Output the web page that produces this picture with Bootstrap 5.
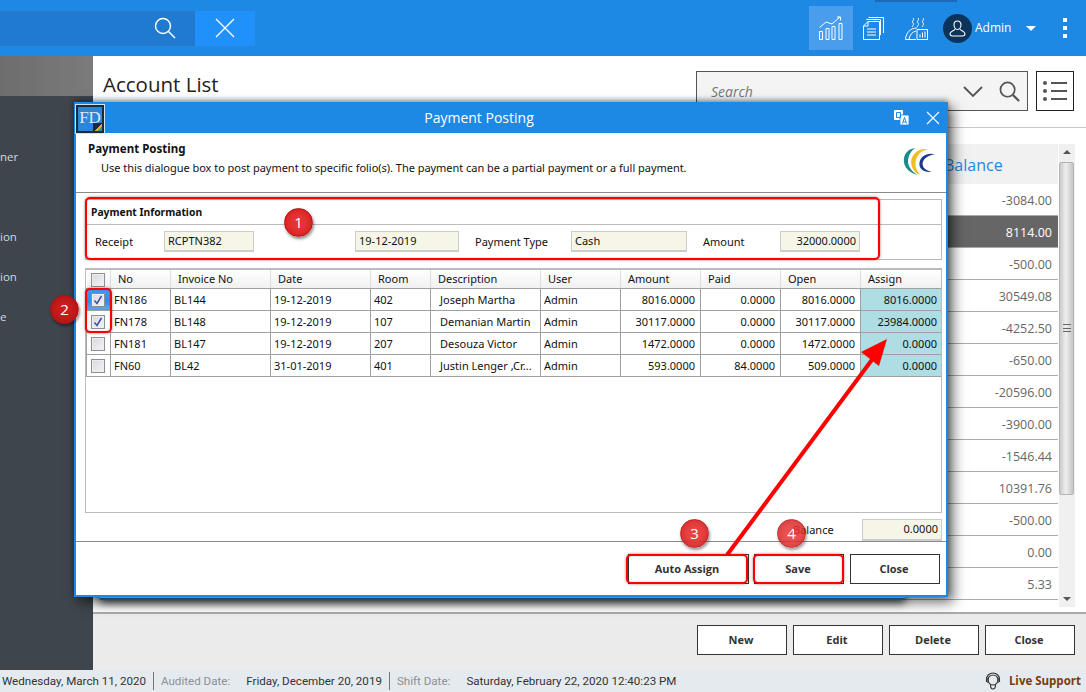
<!DOCTYPE html>
<html lang="en">
<head>
<meta charset="utf-8">
<title>Payment Posting</title>
<link href="https://cdn.jsdelivr.net/npm/bootstrap@5.3.0/dist/css/bootstrap.min.css" rel="stylesheet">
<style>
html,body{margin:0;height:100%;overflow:hidden}
body{font-family:"Open Sans","Liberation Sans",sans-serif;background:#fff;color:#222}
.app-shell{position:relative;width:1086px;height:692px;overflow:hidden}
.top-bar{height:56px;background:#1e88e5;color:#fff}
.top-strip{position:absolute;left:875px;top:0;width:82px;height:2px;background:#1c6ab5}
.search-top{width:256px;height:37px;background:#207ad0;border:1px solid #2a86dc;border-left:0}
.search-top-field{width:195px;padding-right:18px}
.search-top-close{width:60px;background:#2090fb}
.icon-slot{height:44px}
.slot-active{background:#4a9ded;width:44px}
.slot-docs{width:41px}
.slot-steam{width:49px;padding-right:4px}
.avatar-disc{width:29px;height:29px;border-radius:50%;background:#0c3359}
.admin-name{font-size:12px;width:51px;margin-left:3px}
.caret-tri{width:0;height:0;border-left:5.5px solid transparent;border-right:5.5px solid transparent;border-top:5.5px solid #fff;margin-right:27px}
.dot-stack{width:4px;margin-right:19px;gap:4px}
.dot-stack span{display:block;width:4px;height:4px;background:#fff}
.side-rail{width:93px;background:#3e454c;color:#d5d9dc;font-size:11.5px}
.side-head{height:40px;background:linear-gradient(90deg,#6d6d6d,#7b7b7b);margin-bottom:52px}
.side-item{height:40px;line-height:18px}
.main-head{height:72px;padding:0 12px 0 10px;border-bottom:1px solid #c8c8c8}
.page-title{font-size:20.5px;font-weight:400;margin:0;color:#222;line-height:30px;padding-top:13px}
.list-search{width:332px;height:40px;border:1px solid #555;background:#f4f4f4;margin-top:15px;padding:0 7px 0 14px;font-style:italic;color:#777;font-size:14px}
.list-toggle{width:38px;height:40px;border:1px solid #222;margin:15px 0 0 8px;background:#fff}
.list-zone{height:484px;padding:16px 11px 5px 7px}
.bal-head{height:40px;background:#f1f1f1;color:#1e88e5;font-size:16px;padding-left:844px;line-height:43px}
.bal-row{height:32px;border-bottom:1px solid #aaa;text-align:right;padding-right:6px;font-size:12.5px;line-height:33px;color:#666}
.bal-row.is-dark{background:#666;color:#fff}
.scroll-rail{width:16px;margin-left:1px;background:#f0f0f0;position:relative}
.scroll-thumb{position:absolute;left:0;right:1px;top:18px;height:333px;background:linear-gradient(90deg,#c9c9c9,#efefef 45%,#c4c4c4);border:1px solid #b5b5b5;border-radius:2px}
.scroll-up,.scroll-down{position:absolute;left:4px;width:0;height:0;border-left:4px solid transparent;border-right:4px solid transparent}
.scroll-up{top:6px;border-bottom:4px solid #555}
.scroll-down{bottom:6px;border-top:4px solid #555}
.grip-mark{position:absolute;left:3px;top:161px;width:8px;height:8px;border-top:1px solid #666;border-bottom:1px solid #666}
.grip-mark::after{content:"";display:block;height:1px;background:#666;margin-top:2.5px}
.foot-bar{height:58px;background:#ebebeb;border-top:2px solid #aaa;padding:11px 11px 0 0;gap:6px}
.plain-btn{width:90px;height:30px;border:1.5px solid #333;background:#fff;border-radius:0;font-family:"Open Sans",sans-serif;font-size:11px;font-weight:700;color:#333;padding:0 2px 0 0}
.status-bar{height:22px;background:#e5eaee;font-family:Roboto,"Open Sans",sans-serif;font-size:11.6px;color:#333;padding-left:2px;white-space:nowrap;line-height:22px}
.status-dim{color:#8a9096}
.status-sep{width:1px;height:18px;background:#777;margin:0 7px}
.live-help{color:#7a3c0a;font-family:"Open Sans",sans-serif;font-weight:700;font-size:11.5px;margin-right:5px}
.back-window{position:absolute;left:100px;top:300px;width:805px;height:300px;background:#fff;border-bottom:2px solid #1e88e5;box-shadow:0 3px 8px rgba(0,0,0,.7)}
.pay-window{position:absolute;left:74px;top:102px;width:874px;height:495px;background:#fff;border:2px solid #1e88e5;border-top:0;box-shadow:5px 5px 12px rgba(0,0,0,.6),0 -2px 5px rgba(0,0,0,.35);font-family:"Noto Sans","DejaVu Sans",sans-serif;font-size:11px;color:#111}
.win-title{height:31px;background:#1e88e5;color:#fff;font-size:14px;font-family:"Open Sans",sans-serif;position:relative;margin:0 -2px;padding-right:64px}
.fd-logo{position:absolute;left:1px;top:2px;width:30px;height:30px;background:#2a86d8;border:1px solid #cfe3f5;box-shadow:inset 0 0 0 2px #1c2b3a;color:#dceafa;font-family:"Liberation Serif",serif;font-size:17px;line-height:26px;text-align:center;overflow:hidden}
.fd-logo::after{content:"";position:absolute;right:2px;bottom:2px;width:9px;height:8px;background:linear-gradient(135deg,#1c2b3a 55%,#d6b020 55%,#d6b020 75%,#2e9a96 75%)}
.win-tools{position:absolute;right:8px;top:7px;gap:16px}
.win-intro{height:60px;border-bottom:1px solid #8a8a8a;padding:7px 12px 0 12px;position:relative}
.intro-title{font-weight:700;line-height:16px;margin-top:1px;font-size:11.5px}
.intro-text{padding-left:13px;line-height:18px;margin-top:2px;letter-spacing:-.03px}
.swirl-logo{position:absolute;right:10px;top:14px}
.group-frame{margin:6px 4px 0 9px;height:61px;border:1px solid #bbb}
.group-head{height:25px;border-bottom:1px solid #bbb;font-weight:700;font-size:10.3px;padding-left:5px;line-height:24px}
.group-fields{display:grid;grid-template-columns:69px 90px 101px 104px 112px 116px 93px 80px;padding:6px 0 0 9px;align-items:center}
.group-fields>span{padding-top:2px}
.pad-left{padding-left:16px}
.field-box{height:21px;background:#f6f6e8;border:1px solid #ccc;border-bottom-width:2px;padding:0 3px;line-height:17px;white-space:nowrap}
.text-num{text-align:right}
.grid-frame{margin:8px 4px 0 9px;height:245px;border:1px solid #bbb;border-width:2px 1px 1px 1px;overflow:hidden}
.folio-grid{table-layout:fixed;border-collapse:collapse;width:856px;font-size:11px;color:#111}
.folio-grid th{height:18px;font-weight:400;background:linear-gradient(#fff,#f0f0f0);border-right:1px solid #ddd;border-bottom:1px solid #a0a0a0;padding:0 0 0 7px;line-height:17px}
.folio-grid td{height:22px;border:1px solid #a0a0a0;padding:1px 3px 0;line-height:20px;white-space:nowrap;overflow:hidden}
.folio-grid td.name-cell{padding-left:9px}
.folio-grid td.num-cell{text-align:right;padding-right:5px}
.folio-grid td.pick-cell,.folio-grid th.pick-cell{padding:0 1px 0 0;text-align:center}
.folio-grid td.pick-on{background:linear-gradient(#3f9cf4,#2f8ce8 60%,#5aa9f0)}
.folio-grid td.assign-cell{background:#aeddE3}
.w-pick{width:24px}.w-no{width:60px}.w-inv{width:100px}.w-date{width:100px}.w-room{width:60px}.w-desc{width:110px}.w-amt{width:80px}.w-last{width:82px}
.tick-box{display:inline-block;width:14px;height:14px;border:1px solid #8e8f8f;background:linear-gradient(135deg,#d6d8de,#f5f5f7);vertical-align:middle;box-shadow:inset 0 0 0 1px #eee;line-height:0}
.balance-line{height:29px;border-bottom:1px solid #8a8a8a;padding-top:6px}
.balance-label{width:69px;line-height:21px}
.balance-box{width:80px;margin-right:4px;height:22px}
.win-actions{padding:12px 6px 0 0;gap:6px}
.win-actions .w-wide{width:121px;margin-right:-1px;padding-right:3px}
.anno-layer{position:absolute;left:0;top:0;pointer-events:none}
.red-frame{position:absolute;border:2px solid #f00;border-radius:5px;box-shadow:0 0 3px rgba(120,0,0,.55),inset 0 0 2px rgba(120,0,0,.25)}
.frame-one{left:85px;top:197px;width:795px;height:63px}
.frame-two{left:85px;top:288px;width:27px;height:45px}
.frame-three{left:626px;top:554px;width:122px;height:30px}
.frame-four{left:753px;top:554px;width:91px;height:30px}
.num-dot{position:absolute;width:29px;height:29px;border-radius:50%;background:radial-gradient(circle,#e63232 35%,#d01818);border:1px solid #b01010;box-shadow:1px 2px 3px rgba(0,0,0,.45);color:#fff;text-align:center;font-family:"Open Sans",sans-serif;font-size:15px;line-height:27px}
.dot-one{left:284px;top:208px}
.dot-two{left:50px;top:295px;background:radial-gradient(circle,#c81c1c 35%,#a81010)}
.dot-three{left:680px;top:519px;opacity:.92}
.dot-four{left:777px;top:519px;opacity:.85}
</style>
</head>
<body>
<div class="app-shell d-flex flex-column">
  <div class="top-bar d-flex align-items-center flex-shrink-0">
    <div class="search-top d-flex align-items-stretch">
      <div class="search-top-field d-flex align-items-center justify-content-end">
        <svg width="24" height="24" viewBox="0 0 24 24" fill="none" stroke="#fff" stroke-width="1.4"><circle cx="10" cy="10" r="7.5"/><path d="M15.5 15.5 22 22"/></svg>
      </div>
      <div class="search-top-close d-flex align-items-center justify-content-center">
        <svg width="20" height="20" viewBox="0 0 20 20" stroke="#fff" stroke-width="1.3"><path d="M1 1 19 19M19 1 1 19"/></svg>
      </div>
    </div>
    <div class="ms-auto d-flex align-items-center">
      <div class="icon-slot slot-active d-flex align-items-center justify-content-center">
        <svg width="24" height="24" viewBox="0 0 24 24" fill="none" stroke="#fff" stroke-width="1"><path d="M.5 15.5h3v8h-3zM7 12.5h3v11H7zM13 10.5h3v13h-3zM20 7.5h3v16h-3z"/><path d="M.5 11.5 7 6l6 2 8-7M18 1h3.5v3.5"/></svg>
      </div>
      <div class="icon-slot slot-docs d-flex align-items-center justify-content-center">
        <svg width="21" height="23" viewBox="0 0 21 23" fill="none" stroke="#fff" stroke-width="1"><path d="M3.5 3V2.500h14V18M5.500.5h15V16"/><path d="M5 4.500h11.500V22.500H.5V9zM.5 9H5V4.500"/><path d="M4 12h9M4 15h9M4 18h9"/></svg>
      </div>
      <div class="icon-slot slot-steam d-flex align-items-center justify-content-center">
        <svg width="23" height="23" viewBox="0 0 23 23" fill="none" stroke="#fff" stroke-width="1"><path d="M8 1c2 2-2 3 0 5s-2 3 0 4M13 1c2 2-2 3 0 5s-2 3 0 4M18 1c2 2-2 3 0 5s-2 3 0 4"/><path d="M.5 22.500C1 16 5 11 12 11"/><path d="M4 22.500C4.500 18 7 15 11 14"/><path d="M.5 22.500H11"/><path d="M12 12.500h10.500v10H12zM15 20.500v-3M17.500 20.500v-5M20 20.500v-6"/></svg>
      </div>
      <div class="avatar-disc d-flex align-items-center justify-content-center">
        <svg width="17" height="17" viewBox="0 0 17 17" fill="none" stroke="#fff" stroke-width="1.1"><path d="M8.500 1C6.300 1 5 2.700 5 4.800 5 7 6.300 9.500 8.500 9.500S12 7 12 4.800C12 2.700 10.700 1 8.500 1Z"/><path d="M6 9c0 1.500-5 2-5 4.500 0 1.500 1 2.500 2.500 2.500h10c1.500 0 2.500-1 2.500-2.500C16 11 11 10.500 11 9"/></svg>
      </div>
      <div class="admin-name">Admin</div>
      <div class="caret-tri"></div>
      <div class="dot-stack d-flex flex-column"><span></span><span></span><span></span></div>
    </div>
    <div class="top-strip"></div>
  </div>

  <div class="d-flex flex-grow-1">
    <div class="side-rail flex-shrink-0">
      <div class="side-head"></div>
      <div class="side-item">ner</div>
      <div class="side-item"></div>
      <div class="side-item">ion</div>
      <div class="side-item">ion</div>
      <div class="side-item">e</div>
    </div>
    <div class="flex-grow-1 d-flex flex-column">
      <div class="main-head d-flex align-items-start flex-shrink-0">
        <h1 class="page-title">Account List</h1>
        <div class="list-search ms-auto d-flex align-items-center">
          <span>Search</span>
          <svg class="ms-auto me-3" width="20" height="11" viewBox="0 0 20 11" fill="none" stroke="#555" stroke-width="1.8"><path d="M1 1 10 10 19 1"/></svg>
          <svg width="21" height="21" viewBox="0 0 22 22" fill="none" stroke="#555" stroke-width="1.8"><circle cx="9" cy="9" r="7.500"/><path d="M14.500 14.500 21 21" stroke-width="2.400"/></svg>
        </div>
        <div class="list-toggle d-flex align-items-center justify-content-center">
          <svg width="26" height="22" viewBox="0 0 26 22" fill="#555"><circle cx="3" cy="3" r="2"/><circle cx="3" cy="11" r="2"/><circle cx="3" cy="19" r="2"/><path d="M9 2h16v2H9zM9 10h16v2H9zM9 18h16v2H9z"/></svg>
        </div>
      </div>
      <div class="list-zone d-flex flex-shrink-0">
        <div class="flex-grow-1">
          <div class="bal-head">Balance</div>
          <div class="bal-row">-3084.00</div>
          <div class="bal-row is-dark">8114.00</div>
          <div class="bal-row">-500.00</div>
          <div class="bal-row">30549.08</div>
          <div class="bal-row">-4252.50</div>
          <div class="bal-row">-650.00</div>
          <div class="bal-row">-20596.00</div>
          <div class="bal-row">-3900.00</div>
          <div class="bal-row">-1546.44</div>
          <div class="bal-row">10391.76</div>
          <div class="bal-row">-500.00</div>
          <div class="bal-row">0.00</div>
          <div class="bal-row">5.33</div>
        </div>
        <div class="scroll-rail flex-shrink-0">
          <div class="scroll-up"></div>
          <div class="scroll-thumb"><div class="grip-mark"></div></div>
          <div class="scroll-down"></div>
        </div>
      </div>
      <div class="foot-bar d-flex justify-content-end flex-shrink-0">
        <button type="button" class="btn plain-btn">New</button>
        <button type="button" class="btn plain-btn">Edit</button>
        <button type="button" class="btn plain-btn">Delete</button>
        <button type="button" class="btn plain-btn">Close</button>
      </div>
    </div>
  </div>

  <div class="status-bar d-flex align-items-center flex-shrink-0">
    <span>Wednesday, March 11, 2020</span><span class="status-sep"></span>
    <span class="status-dim me-3">Audited Date:</span><span>Friday, December 20, 2019</span><span class="status-sep"></span>
    <span class="status-dim me-3">Shift Date:</span><span>Saturday, February 22, 2020 12:40:23 PM</span>
    <svg class="ms-auto me-2" width="16" height="18" viewBox="0 0 16 18" fill="none" stroke="#333" stroke-width="1.100"><circle cx="8" cy="8" r="5"/><path d="M1.500 10V7.500C1.500 3.500 4.500 1 8 1s6.500 2.500 6.500 6.500V10M3 6v5M13 6v5M5.500 13c0 2 1 4 2.500 4s2.500-2 2.500-4"/></svg>
    <span class="live-help">Live Support</span>
  </div>

  <div class="back-window"></div>

  <div class="pay-window d-flex flex-column">
    <div class="win-title d-flex align-items-center justify-content-center">
      <div class="fd-logo">FD</div>
      <span>Payment Posting</span>
      <div class="win-tools d-flex align-items-center">
        <svg width="17" height="17" viewBox="0 0 17 17"><rect x="1" y="1" width="9" height="10" rx="1" fill="#fff"/><rect x="7" y="6" width="9" height="10" rx="1" fill="#fff" stroke="#1e88e5" stroke-width=".8"/><path d="M3.500 3.500h4v5h-4z" fill="none" stroke="#1e88e5"/><path d="M9.500 14.500l2-6 2 6M10.300 13h2.400" fill="none" stroke="#1e88e5"/></svg>
        <svg width="14" height="14" viewBox="0 0 14 14" stroke="#fff" stroke-width="1.100"><path d="M1 1 13 13M13 1 1 13"/></svg>
      </div>
    </div>
    <div class="win-intro">
      <div class="intro-title">Payment Posting</div>
      <div class="intro-text">Use this dialogue box to post payment to specific folio(s). The payment can be a partial payment or a full payment.</div>
      <svg class="swirl-logo" width="33" height="29" viewBox="0 0 32 28" fill="none">
        <path d="M12 1C3 2 0 9 1 15s6 10 13 12C8 23 4 18 5 12S9 3 12 1Z" fill="#1f8a8a"/>
        <path d="M24 2C13 1 7 9 8 16s5 10 9 11C12 22 11 16 13 11s6-8 11-9Z" fill="#f0bd22"/>
        <path d="M31 7c-8-2-14 2-15 8s4 10 12 9c-6-1-9-4-9-8s5-8 12-9Z" fill="#1f3a8a"/>
      </svg>
    </div>
    <div class="group-frame">
      <div class="group-head">Payment Information</div>
      <div class="group-fields">
        <span>Receipt</span>
        <div class="field-box">RCPTN382</div>
        <span></span>
        <div class="field-box">19-12-2019</div>
        <span class="pad-left">Payment Type</span>
        <div class="field-box">Cash</div>
        <span class="pad-left">Amount</span>
        <div class="field-box text-num">32000.0000</div>
      </div>
    </div>
    <div class="grid-frame">
      <table class="folio-grid">
        <colgroup>
          <col class="w-pick"><col class="w-no"><col class="w-inv"><col class="w-date"><col class="w-room"><col class="w-desc"><col class="w-amt"><col class="w-amt"><col class="w-amt"><col class="w-amt"><col class="w-last">
        </colgroup>
        <thead>
          <tr><th class="pick-cell"><span class="tick-box"></span></th><th>No</th><th>Invoice No</th><th>Date</th><th>Room</th><th>Description</th><th>User</th><th>Amount</th><th>Paid</th><th>Open</th><th>Assign</th></tr>
        </thead>
        <tbody>
          <tr><td class="pick-cell pick-on"><span class="tick-box"><svg width="12" height="12" viewBox="0 0 12 12" fill="none" stroke="#3a4fa8" stroke-width="1.500"><path d="M2.500 6.500 5 9.500 9.500 2"/></svg></span></td><td>FN186</td><td>BL144</td><td>19-12-2019</td><td>402</td><td class="name-cell">Joseph Martha</td><td>Admin</td><td class="num-cell">8016.0000</td><td class="num-cell">0.0000</td><td class="num-cell">8016.0000</td><td class="num-cell assign-cell">8016.0000</td></tr>
          <tr><td class="pick-cell"><span class="tick-box"><svg width="12" height="12" viewBox="0 0 12 12" fill="none" stroke="#3a4fa8" stroke-width="1.500"><path d="M2.500 6.500 5 9.500 9.500 2"/></svg></span></td><td>FN178</td><td>BL148</td><td>19-12-2019</td><td>107</td><td class="name-cell">Demanian Martin</td><td>Admin</td><td class="num-cell">30117.0000</td><td class="num-cell">0.0000</td><td class="num-cell">30117.0000</td><td class="num-cell assign-cell">23984.0000</td></tr>
          <tr><td class="pick-cell"><span class="tick-box"></span></td><td>FN181</td><td>BL147</td><td>19-12-2019</td><td>207</td><td class="name-cell">Desouza Victor</td><td>Admin</td><td class="num-cell">1472.0000</td><td class="num-cell">0.0000</td><td class="num-cell">1472.0000</td><td class="num-cell assign-cell">0.0000</td></tr>
          <tr><td class="pick-cell"><span class="tick-box"></span></td><td>FN60</td><td>BL42</td><td>31-01-2019</td><td>401</td><td class="name-cell">Justin Lenger ,Cr...</td><td>Admin</td><td class="num-cell">593.0000</td><td class="num-cell">84.0000</td><td class="num-cell">509.0000</td><td class="num-cell assign-cell">0.0000</td></tr>
        </tbody>
      </table>
    </div>
    <div class="balance-line d-flex justify-content-end">
      <span class="balance-label">Balance</span>
      <div class="field-box text-num balance-box">0.0000</div>
    </div>
    <div class="win-actions d-flex justify-content-end">
      <button type="button" class="btn plain-btn w-wide">Auto Assign</button>
      <button type="button" class="btn plain-btn">Save</button>
      <button type="button" class="btn plain-btn">Close</button>
    </div>
  </div>

  <svg class="anno-layer" width="1086" height="692" viewBox="0 0 1086 692">
    <path d="M727 555 874 357" stroke="#f00" stroke-width="4" fill="none"/>
    <path d="M887 339 879 366 861 352Z" fill="#f00"/>
  </svg>
  <div class="red-frame frame-one"></div>
  <div class="red-frame frame-two"></div>
  <div class="red-frame frame-three"></div>
  <div class="red-frame frame-four"></div>
  <div class="num-dot dot-one">1</div>
  <div class="num-dot dot-two">2</div>
  <div class="num-dot dot-three">3</div>
  <div class="num-dot dot-four">4</div>
</div>
</body>
</html>
